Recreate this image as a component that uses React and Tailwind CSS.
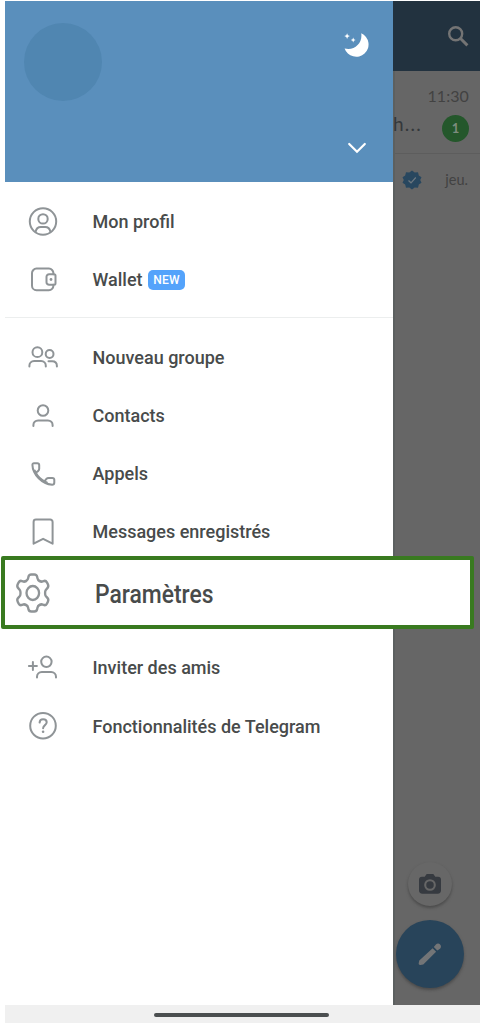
import React from "react";

function Icon({ children, size = 32, width = 2, box = "0 0 32 32" }) {
  return (
    <svg width={size} height={size} viewBox={box} fill="none" stroke="#8f9497" strokeWidth={width} strokeLinecap="round" strokeLinejoin="round" className="shrink-0">
      {children}
    </svg>
  );
}

const ProfileIcon = () => (
  <Icon>
    <circle cx="16" cy="15.500" r="13.2" />
    <circle cx="16" cy="12.900" r="4.7" />
    <path d="M8.6 25.700c.7-3.2 2.7-4.7 5.2-4.7h4.4c2.5 0 4.500 1.500 5.200 4.700" />
  </Icon>
);

const WalletIcon = () => (
  <Icon>
    <path d="M26.400 10.200V9.100a4.500 4.500 0 0 0-4.500-4.500H9.500A4.500 4.500 0 0 0 5 9.100v12.600a4.500 4.500 0 0 0 4.500 4.500h12.400a4.500 4.500 0 0 0 4.500-4.500v-.9" />
    <path d="M27 10.200h-4.900a2.600 2.600 0 0 0-2.600 2.600v5.400a2.600 2.600 0 0 0 2.600 2.600H27a1.500 1.500 0 0 0 1.500-1.500v-7.600a1.500 1.500 0 0 0-1.500-1.500z" />
    <circle cx="24" cy="15.500" r="1.400" fill="#8f9497" stroke="none" />
  </Icon>
);

const GroupIcon = () => (
  <Icon>
    <circle cx="10.400" cy="11.200" r="4.900" />
    <circle cx="22.600" cy="13" r="3.900" />
    <path d="M2.400 25.500v-.8c0-2.700 2-4.700 4.700-4.700h7c2.700 0 4.700 2 4.700 4.700v.8" />
    <path d="M21.500 20.300h3.600c2.800 0 4.800 1.800 4.800 4.700v.5" />
  </Icon>
);

const ContactIcon = () => (
  <Icon>
    <circle cx="16" cy="10.500" r="5.300" />
    <path d="M6.400 26v-1c0-2.600 2-4.600 4.700-4.600h9.800c2.700 0 4.700 2 4.700 4.600v1" />
  </Icon>
);

const PhoneIcon = () => (
  <Icon>
    <path d="M6.700 5.200h3.600c1.100 0 1.900.8 1.900 1.900v3.700c0 1-.4 1.700-1.200 2.300l-2.200 1.700c2.100 4 4.500 6.400 8.600 8.600l2-2.500c.6-.7 1.300-1 2.200-1h3.700c1.200 0 2 .8 2 1.900v2.700c0 1.300-.9 2.200-2.200 2.200C15.300 26 5.700 16.800 5.400 6.700c0-.9.500-1.500 1.300-1.500z" />
    <path d="M8.800 14.800l-1-2.200M17.400 23.400l2.400 1" />
  </Icon>
);

const BookmarkIcon = () => (
  <Icon>
    <path d="M6.600 27.700V6a2.400 2.400 0 0 1 2.400-2.400h14.200A2.400 2.400 0 0 1 25.600 6v21.700l-9.500-4.900z" />
  </Icon>
);

const InviteIcon = () => (
  <Icon>
    <circle cx="19.400" cy="9.800" r="5.200" />
    <path d="M10 25.600v-.8c0-2.700 2-4.800 4.800-4.800h9.300c2.800 0 4.900 2.100 4.900 4.800v.8M1.900 13.900h8M5.900 9.900v8" />
  </Icon>
);

const HelpIcon = () => (
  <Icon>
    <circle cx="16" cy="15.700" r="12.800" />
    <path d="M12.600 12.600c.1-2.100 1.400-3.400 3.500-3.400s3.600 1.300 3.600 3.100c0 2.800-3.600 2.900-3.600 6" />
    <circle cx="16.100" cy="21.700" r="1.300" fill="#8f9497" stroke="none" />
  </Icon>
);

const GearIcon = () => (
  <Icon size={40} box="0 0 40 40" width={2.6}>
    <g transform="translate(1.800 0) scale(0.900 1)">
      <circle cx="20" cy="20" r="7" />
      <path d="M18.300 1.500h3.400c1.800 0 2.900.9 3.200 2.500l.2 1.100c.3 1.500 1.100 2.300 2.300 2.900 1.300.7 2.400.9 3.700.4l.8-.3c1.600-.6 2.900-.2 3.800 1.300l1 1.800c.9 1.600.7 2.900-.6 4l-.8.700c-1.200 1-1.600 1.900-1.600 3.200v1.800c0 1.300.4 2.200 1.600 3.200l.8.700c1.300 1.100 1.500 2.400.6 4l-1 1.800c-.9 1.500-2.200 1.900-3.800 1.300l-.8-.3c-1.300-.5-2.400-.3-3.700.4-1.200.6-2 1.400-2.300 2.900l-.2 1.100c-.3 1.600-1.400 2.500-3.200 2.500h-3.400c-1.800 0-2.900-.9-3.200-2.500l-.2-1.100c-.3-1.500-1.100-2.300-2.300-2.900-1.300-.7-2.400-.9-3.700-.4l-.8.3c-1.600.6-2.900.2-3.800-1.300l-1-1.800c-.9-1.600-.7-2.900.6-4l.8-.7c1.200-1 1.600-1.900 1.600-3.200v-1.800c0-1.300-.4-2.200-1.600-3.200l-.8-.7c-1.300-1.100-1.500-2.400-.6-4l1-1.800C5.200 7.900 6.500 7.500 8.100 8.100l.8.300c1.300.5 2.400.3 3.700-.4 1.200-.6 2-1.400 2.300-2.900l.2-1.100c.3-1.600 1.400-2.500 3.200-2.500z" />
    </g>
  </Icon>
);

function Item({ icon, label, badge }) {
  return (
    <li className="flex h-[58.200px] items-center pl-[22px]">
      {icon}
      <span className="ml-[33.500px] whitespace-nowrap">{label}</span>
      {badge && (
        <span className="ml-[5.500px] flex h-5 w-[37px] items-center justify-center rounded-[5px] bg-[#54a3fb] pt-px text-[12px] font-medium tracking-[0.300px] text-white">
          {badge}
        </span>
      )}
    </li>
  );
}

function Drawer() {
  return (
    <aside className="w-[388px] shrink-0 bg-white">
      <header className="flex h-[181px] justify-between bg-[#5a8fbc] pl-[19px] pr-[22px] pt-[22px]">
        <div className="size-[78px] rounded-full bg-[#5086b1]" />
        <div className="flex flex-col items-center">
          <svg width="28" height="28" viewBox="0 0 28 28" fill="#fff" className="mt-[6px]">
            <path d="M18.200 4.200A12.300 12.300 0 1 1 1.600 19.400C11.400 22 19.900 14 18.200 4.200z" />
            <path d="M4.100 4.300l.8 2 2 .8-2 .8-.8 2-.8-2-2-.8 2-.8z" />
            <path d="M10.200 8.600l.7 1.700 1.700.7-1.700.7-.7 1.700-.7-1.700-1.700-.7 1.700-.7z" />
          </svg>
          <svg width="20" height="12" viewBox="0 0 20 12" fill="none" stroke="#fff" strokeWidth="2.200" strokeLinecap="round" className="mt-[84.500px]">
            <path d="M2.200 2L10 9.800 17.800 2" />
          </svg>
        </div>
      </header>
      <nav>
        <ul className="h-[136px] border-b border-[#eceeee] pt-[10.500px]">
          <Item icon={<ProfileIcon />} label="Mon profil" />
          <Item icon={<WalletIcon />} label="Wallet" badge="NEW" />
        </ul>
        <ul className="pt-[10.300px]">
          <Item icon={<GroupIcon />} label="Nouveau groupe" />
          <Item icon={<ContactIcon />} label="Contacts" />
          <Item icon={<PhoneIcon />} label="Appels" />
          <Item icon={<BookmarkIcon />} label="Messages enregistrés" />
        </ul>
        <ul className="pt-[77.700px]">
          <Item icon={<InviteIcon />} label="Inviter des amis" />
          <Item icon={<HelpIcon />} label="Fonctionnalités de Telegram" />
        </ul>
      </nav>
    </aside>
  );
}

function VerifiedBadge() {
  return (
    <svg width="20" height="20" viewBox="0 0 20 20">
      <path d="M10 .6l2.700 2 3.300-.4.800 3.200 2.700 1.900L18.200 10l1.300 2.700-2.700 1.900-.8 3.200-3.300-.4-2.700 2-2.700-2-3.300.4-.8-3.200-2.700-1.900L1.800 10 .5 7.300l2.700-1.900L4 2.200l3.300.4z" fill="#28475f" />
      <path d="M6.500 10.500l2.500 2.300 4.800-5.300" fill="none" stroke="#6d7880" strokeWidth="1.200" />
    </svg>
  );
}

function ChatList() {
  return (
    <main className="flex min-w-0 flex-1 flex-col border-l-2 border-[#5c6060] bg-[#666] font-normal text-[#424242]">
      <div className="-ml-0.5 flex h-[70px] items-center justify-end bg-[#22323f] pr-[11px]">
        <svg width="22" height="22" viewBox="0 0 22 22" fill="none" stroke="#747474" strokeWidth="2.400">
          <circle cx="8.700" cy="8.700" r="6.500" />
          <path d="M13.300 13.300l7.100 7.100" strokeWidth="2.900" />
        </svg>
      </div>
      <div className="flex h-[83px] flex-col border-b border-[#5d5d5d] pr-[11px] pt-[15px] font-[Lato,sans-serif]">
        <div className="flex h-5 items-center justify-end text-[16px] tracking-[0.100px]">11:30</div>
        <div className="flex items-center justify-between pt-[6px]">
          <span className="-ml-[2px] -mt-[6px] text-[19px] leading-6 tracking-[1.200px] text-[#34383b]">h...</span>
          <span className="mt-[3px] flex size-[27px] items-center justify-center rounded-full bg-[#24572b] text-[13px] font-bold text-[#7d8c7f]">1</span>
        </div>
      </div>
      <div className="flex items-center justify-between pl-[7px] pr-[12px] pt-[15px] font-[Lato,sans-serif] text-[14.500px]">
        <VerifiedBadge />
        <span>jeu.</span>
      </div>
      <div className="mt-auto flex flex-col items-start pb-[17px]">
        <button className="ml-[13px] flex size-11 items-center justify-center rounded-full bg-[#676767] shadow-[0_2px_3px_#4b4b4b]">
          <svg width="24" height="22" viewBox="0 0 24 22">
            <path d="M8.700 1.100h6.600l2 2.600h2.700a3 3 0 0 1 3 3v10.600a3.400 3.400 0 0 1-3.400 3.400H4.400A3.400 3.400 0 0 1 1 17.300V6.700a3 3 0 0 1 3-3h2.700z" fill="#363a40" />
            <circle cx="12" cy="12" r="4.800" fill="none" stroke="#666" strokeWidth="2.100" />
          </svg>
        </button>
        <button className="ml-px mt-[14px] flex size-[68px] items-center justify-center rounded-full bg-[#28445a] shadow-[0_2px_3px_#4b4b4b]">
          <svg width="26" height="26" viewBox="0 0 26 26" fill="#737577">
            <path d="M1.700 22.300L2.300 19.500 15.600 7.200l3.500 3.500-12.800 12.800-3 .5c-1 .1-1.800-.7-1.600-1.700z" />
            <path d="M16.800 6l2.100-2.400c1.200-1.300 3-1.300 4.200-.1s1.200 2.900-.1 4.200L20.300 9.600z" />
          </svg>
        </button>
      </div>
    </main>
  );
}

export default function App() {
  return (
    <div className="relative flex h-[1023px] w-[480px] flex-col overflow-hidden bg-white pl-[5px] pt-px font-[Roboto,sans-serif] text-[18px] font-medium text-[#484b4b]">
      <div className="flex h-[1004px] shrink-0">
        <Drawer />
        <ChatList />
      </div>
      <footer className="flex flex-1 justify-center bg-[#f0f0f0] pt-2">
        <div className="mr-[2px] h-1 w-[175px] rounded-full bg-[#4b4f50]" />
      </footer>
      <div className="absolute left-px top-[556px] flex h-[73px] w-[473px] items-center rounded-[2px] border-4 border-[#397a20] bg-white pl-2 text-[25px]">
        <GearIcon />
        <span className="ml-[42px] mt-[5px] origin-left scale-x-[0.915]">Paramètres</span>
      </div>
    </div>
  );
}
